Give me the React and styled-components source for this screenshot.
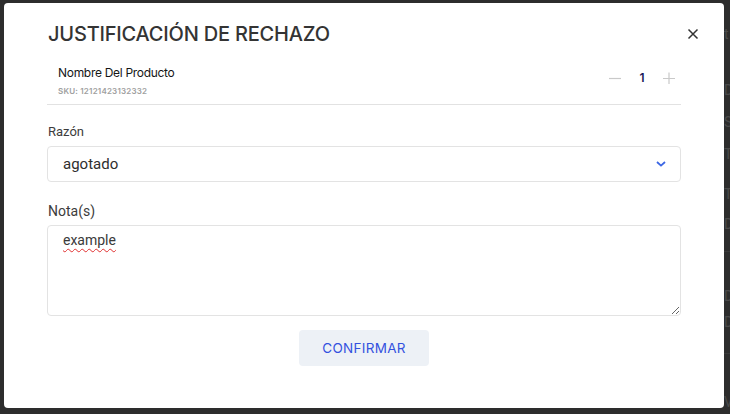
import styled, { createGlobalStyle } from "styled-components";

const GlobalStyle = createGlobalStyle`
  html, body {
    margin: 0;
    padding: 0;
    background: #2d2d2d;
    font-family: Roboto, "Liberation Sans", sans-serif;
  }
  * { box-sizing: border-box; }
`;

const Page = styled.div`
  width: 730px;
  height: 414px;
  overflow: hidden;
  display: flex;
  flex-direction: column;
  padding: 26px 0 0 724px;
`;

const PageRow = styled.div`
  height: ${(p) => p.h}px;
  font-size: 14px;
  color: #4a4a4a;
  white-space: nowrap;
  border-bottom: ${(p) => (p.line ? "1px solid #3a3a3a" : "none")};
`;

const Overlay = styled.div`
  position: fixed;
  inset: 0;
  padding: 3px 6px 6px 4px;
`;

const Modal = styled.div`
  width: 720px;
  height: 405px;
  background: #fff;
  border-radius: 4px;
  padding: 20px 25px 0 43px;
  display: flex;
  flex-direction: column;
`;

const Header = styled.div`
  display: flex;
  align-items: center;
  justify-content: space-between;
  height: 22px;
`;

const Title = styled.h2`
  margin: 0 0 0 1px;
  font-family: Inter, "Noto Sans", sans-serif;
  font-weight: 500;
  font-size: 20px;
  letter-spacing: -0.2px;
  color: #343434;
`;

const CloseButton = styled.button`
  border: none;
  background: none;
  padding: 0;
  width: 12px;
  height: 12px;
  display: flex;
  cursor: pointer;
`;

const ProductRow = styled.div`
  margin-top: 20px;
  width: 634px;
  display: flex;
  align-items: flex-start;
  justify-content: space-between;
  padding: 0 6px 7px 11px;
  border-bottom: 1px solid #e2e2e2;
`;

const ProductInfo = styled.div`
  display: flex;
  flex-direction: column;
  gap: 4px;
`;

const ProductName = styled.div`
  font-family: Inter, sans-serif;
  font-size: 12px;
  color: #161616;
  letter-spacing: -0.3px;
  line-height: 16px;
`;

const Sku = styled.div`
  font-family: Inter, sans-serif;
  font-size: 8px;
  font-weight: 600;
  color: #a0a0a0;
  letter-spacing: 0.2px;
  line-height: 12px;
`;

const Quantity = styled.div`
  display: flex;
  align-items: center;
  gap: 18px;
  margin-top: 5px;
`;

const QtyButton = styled.button`
  border: none;
  background: none;
  padding: 0;
  width: 12px;
  height: 12px;
  display: flex;
`;

const QtyValue = styled.span`
  font-family: Inter, sans-serif;
  font-size: 12px;
  font-weight: 600;
  color: #1c1c58;
  min-width: 6px;
  text-align: center;
`;

const Field = styled.div`
  margin-top: ${(p) => p.mt}px;
  display: flex;
  flex-direction: column;
  gap: ${(p) => p.gap}px;
`;

const Label = styled.label`
  font-size: ${(p) => p.size}px;
  color: #3c3c3c;
  margin-left: 1px;
  line-height: 16px;
`;

const SelectBox = styled.div`
  width: 634px;
  height: 36px;
  border: 1px solid #e3e3e3;
  border-radius: 4px;
  display: flex;
  align-items: center;
  justify-content: space-between;
  padding: 0 14px 0 15px;
  font-size: 15px;
  color: #2e2e2e;
`;

const TextArea = styled.textarea`
  width: 634px;
  height: 91px;
  border: 1px solid #e3e3e3;
  border-radius: 4px;
  padding: 6px 15px;
  font-family: Roboto, sans-serif;
  font-size: 14px;
  color: #3a3a3a;
  text-decoration: underline wavy #e03030;
  text-decoration-thickness: 1px;
  text-underline-offset: 3px;
  outline: none;
`;

const Footer = styled.div`
  display: flex;
  justify-content: center;
  margin-top: 14px;
  width: 634px;
`;

const ConfirmButton = styled.button`
  width: 130px;
  height: 36px;
  border: none;
  border-radius: 4px;
  background: #edf1f6;
  color: #3451df;
  font-family: Inter, sans-serif;
  font-size: 13.5px;
  letter-spacing: 0.3px;
  cursor: pointer;
`;

const bgRows = [
  { h: 22, t: "t" },
  { h: 34, t: "" },
  { h: 33, t: "D" },
  { h: 32, t: "Si" },
  { h: 40, t: "Ta" },
  { h: 30, t: "Te" },
  { h: 37, t: "D", line: true },
  { h: 36, t: "" },
  { h: 26, t: "D" },
  { h: 41, t: "D", line: true },
  { h: 40, t: "" },
  { h: 20, t: "V" },
];

export default function App() {
  return (
    <>
      <GlobalStyle />
      <Page>
        {bgRows.map((r, i) => (
          <PageRow key={i} h={r.h} line={r.line}>
            {r.t}
          </PageRow>
        ))}
      </Page>
      <Overlay>
        <Modal>
          <Header>
            <Title>JUSTIFICACIÓN DE RECHAZO</Title>
            <CloseButton aria-label="cerrar">
              <svg width="12" height="12" viewBox="0 0 12 12">
                <path d="M1.5 1.5L10.5 10.5M10.5 1.5L1.5 10.5" stroke="#333" strokeWidth="1.5" />
              </svg>
            </CloseButton>
          </Header>

          <ProductRow>
            <ProductInfo>
              <ProductName>Nombre Del Producto</ProductName>
              <Sku>SKU: 12121423132332</Sku>
            </ProductInfo>
            <Quantity>
              <QtyButton aria-label="menos">
                <svg width="12" height="12" viewBox="0 0 12 12">
                  <path d="M0 6.5H12" stroke="#c9c9c9" strokeWidth="1.2" />
                </svg>
              </QtyButton>
              <QtyValue>1</QtyValue>
              <QtyButton aria-label="más">
                <svg width="12" height="12" viewBox="0 0 12 12">
                  <path d="M0 6.5H12M6 0.5V12.5" stroke="#c9c9c9" strokeWidth="1.2" />
                </svg>
              </QtyButton>
            </Quantity>
          </ProductRow>

          <Field mt={19} gap={6}>
            <Label size={13}>Razón</Label>
            <SelectBox>
              <span>agotado</span>
              <svg width="10" height="6" viewBox="0 0 10 6">
                <path d="M1 1L5 4.6L9 1" stroke="#3b66e4" strokeWidth="1.8" fill="none" />
              </svg>
            </SelectBox>
          </Field>

          <Field mt={21} gap={6}>
            <Label size={14}>Nota(s)</Label>
            <TextArea defaultValue="example" spellCheck />
          </Field>

          <Footer>
            <ConfirmButton>CONFIRMAR</ConfirmButton>
          </Footer>
        </Modal>
      </Overlay>
    </>
  );
}
